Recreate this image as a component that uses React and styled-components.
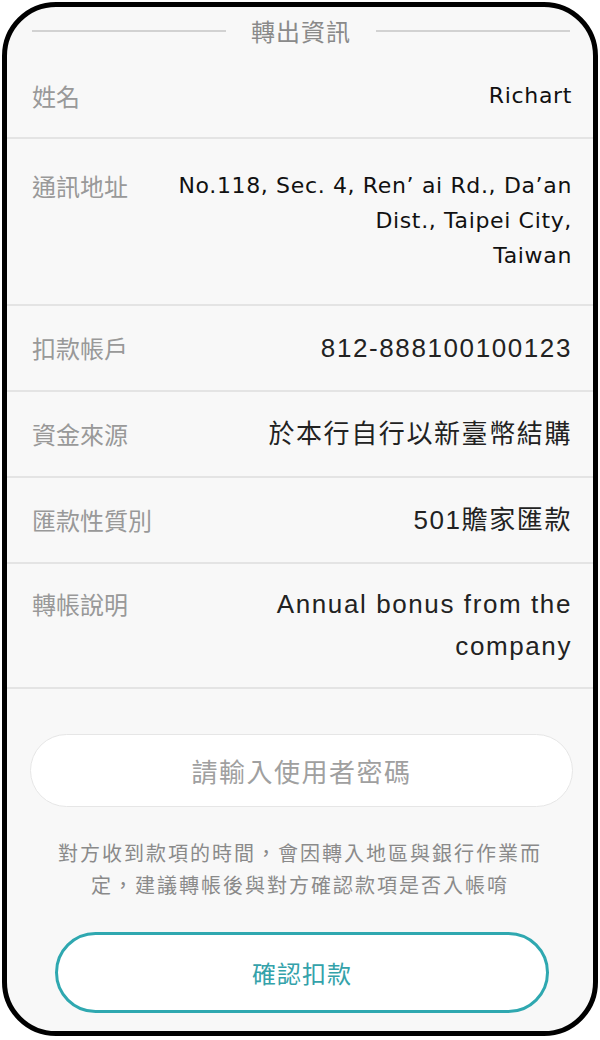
import React from "react";
import styled, { createGlobalStyle } from "styled-components";

const GlobalStyle = createGlobalStyle`
  html, body { margin: 0; padding: 0; background: #ffffff; }
  *, *::before, *::after { box-sizing: border-box; }
`;

const CJK = `"Noto Sans CJK TC", "Noto Sans CJK SC", sans-serif`;

const Phone = styled.div`
  margin: 2px;
  width: 596px;
  height: 1034px;
  border: 5px solid #000;
  border-radius: 54px;
  background: #f8f8f8;
  overflow: hidden;
  display: flex;
  flex-direction: column;
  font-family: ${CJK};
`;

const Header = styled.div`
  height: 48px;
  flex-shrink: 0;
  display: flex;
  align-items: center;
  gap: 25px;
  padding: 0 23px 0 25px;
`;

const HeaderLine = styled.div`
  flex: 1;
  height: 2px;
  background: #d2d2d2;
`;

const HeaderTitle = styled.div`
  font-size: 24px;
  line-height: 1;
  letter-spacing: 1px;
  color: #8a8a8a;
`;

const Row = styled.div`
  display: flex;
  align-items: ${(p) => (p.$top ? "flex-start" : "center")};
  gap: 16px;
  flex-shrink: 0;
  min-height: ${(p) => p.$h || "auto"};
  padding: ${(p) => p.$pad || "0"} 21px ${(p) => p.$padB || "0"} 25px;
  border-bottom: 2px solid #e4e4e4;
`;

const Label = styled.div`
  flex: 0 0 120px;
  font-size: 24px;
  line-height: ${(p) => p.$lh || "28px"};
  color: #999999;
  font-family: ${CJK};
`;

const Value = styled.div`
  flex: 1;
  text-align: right;
  color: ${(p) => (p.$gothic ? "#111111" : "#222222")};
  font-family: ${(p) =>
    p.$gothic ? `"DejaVu Sans", ${CJK}` : `"Liberation Sans", ${CJK}`};
  font-size: ${(p) => (p.$gothic ? "22px" : "26px")};
  letter-spacing: ${(p) => (p.$gothic ? "0.65px" : "1.6px")};
  line-height: ${(p) => p.$lh || "32px"};
`;

const PasswordInput = styled.input`
  flex-shrink: 0;
  margin: 45px 0 0 23px;
  width: 543px;
  height: 73px;
  border: 1.5px solid #e6e6e6;
  border-radius: 37px;
  background: #ffffff;
  outline: none;
  text-align: center;
  font-family: ${CJK};
  font-size: 26px;
  letter-spacing: 1.5px;
  color: #333;
  &::placeholder {
    color: #a0a0a0;
  }
`;

const Note = styled.p`
  flex-shrink: 0;
  margin: 30px auto 0;
  width: 490px;
  text-align: center;
  font-size: 20px;
  line-height: 32px;
  letter-spacing: 2px;
  color: #8a8a8a;
  font-family: ${CJK};
`;

const ConfirmButton = styled.button`
  flex-shrink: 0;
  margin: 31px 0 0 48px;
  width: 494px;
  height: 81px;
  border: 3px solid #2fa8b0;
  border-radius: 41px;
  background: #ffffff;
  color: #34a2aa;
  font-family: ${CJK};
  font-size: 24px;
  letter-spacing: 1px;
  cursor: pointer;
`;

export default function App() {
  return (
    <>
      <GlobalStyle />
      <Phone>
        <Header>
          <HeaderLine />
          <HeaderTitle>轉出資訊</HeaderTitle>
          <HeaderLine />
        </Header>

        <Row $h="84px">
          <Label>姓名</Label>
          <Value $gothic>Richart</Value>
        </Row>

        <Row $top $pad="29px" $padB="31px">
          <Label $lh="35px">通訊地址</Label>
          <Value $gothic $lh="35px">
            No.118, Sec. 4, Ren’ ai Rd., Da’an
            <br />
            Dist., Taipei City,
            <br />
            Taiwan
          </Value>
        </Row>

        <Row $h="86px">
          <Label>扣款帳戶</Label>
          <Value>812-888100100123</Value>
        </Row>

        <Row $h="86px">
          <Label>資金來源</Label>
          <Value>於本行自行以新臺幣結購</Value>
        </Row>

        <Row $h="86px">
          <Label>匯款性質別</Label>
          <Value>501贍家匯款</Value>
        </Row>

        <Row $top $pad="19px" $padB="20px">
          <Label $lh="42px">轉帳說明</Label>
          <Value $lh="42px">Annual bonus from the company</Value>
        </Row>

        <PasswordInput type="password" placeholder="請輸入使用者密碼" />

        <Note>
          對方收到款項的時間，會因轉入地區與銀行作業而定，建議轉帳後與對方確認款項是否入帳唷
        </Note>

        <ConfirmButton type="button">確認扣款</ConfirmButton>
      </Phone>
    </>
  );
}
